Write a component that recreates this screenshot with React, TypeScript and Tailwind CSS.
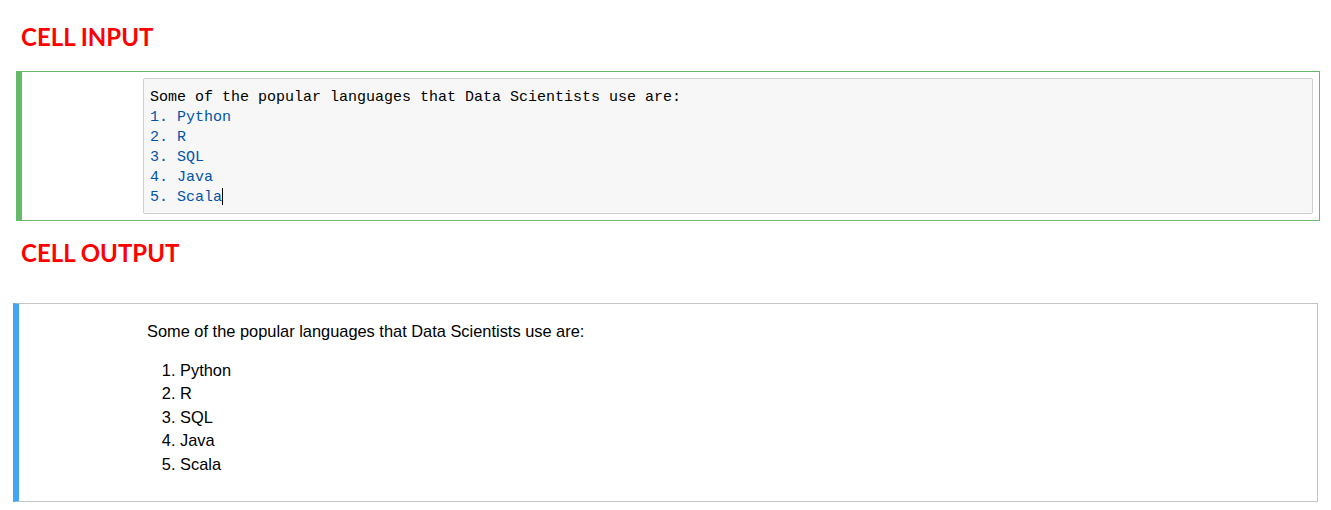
export default function App() {
  const langs = ["Python", "R", "SQL", "Java", "Scala"];
  return (
    <div className="w-[1331px] h-[510px] overflow-hidden bg-white font-['Liberation_Sans',Arial,sans-serif]">
      {/* input cell */}
      <div className="h-[71px] pt-[22px] pl-[21px]">
        <h2 className="font-['Lato',sans-serif] font-bold text-[24px] leading-[29px] text-[#ff0000]">CELL INPUT</h2>
      </div>
      <div className="ml-4 mr-[11px] border border-[#66bb6a] border-l-[6px] pt-[6px] pr-[6px] pb-[6px] pl-[121px]">
        <div className="bg-[#f7f7f7] border border-[#cfcfcf] rounded-[2px] px-[6px] pt-[9px] pb-[5px] font-['Liberation_Mono',monospace] text-[15px] leading-[20px]">
          <div className="text-black">Some of the popular languages that Data Scientists use are:</div>
          {langs.map((l, i) => (
            <div key={l} className="text-[#05a]">
              {i + 1}. {l}
              {i === langs.length - 1 && <span className="inline-block align-middle w-px h-[17px] bg-black -mt-[2px]" />}
            </div>
          ))}
        </div>
      </div>

      {/* rendered output */}
      <div className="h-[82px] pt-[17px] pl-[21px]">
        <h2 className="font-['Lato',sans-serif] font-bold text-[24px] leading-[29px] text-[#ff0000]">CELL OUTPUT</h2>
      </div>
      <div className="ml-[13px] mr-[13px] border border-[#c4c4c4] border-l-[6px] border-l-[#42a5f5] pt-[16px] pb-[25px] pl-[128px] text-[16.4px] leading-[23.4px] text-black">
        <p className="mb-[15.6px]">Some of the popular languages that Data Scientists use are:</p>
        <ol className="list-decimal pl-[33px]">
          {langs.map((l) => (
            <li key={l}>{l}</li>
          ))}
        </ol>
      </div>
    </div>
  );
}
